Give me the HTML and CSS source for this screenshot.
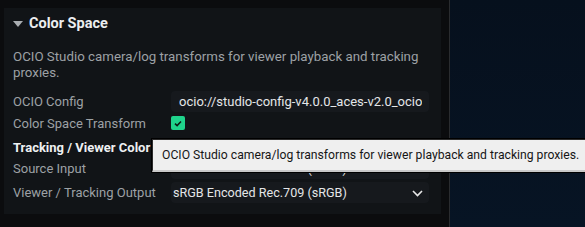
FILE: index.html
```html
<!DOCTYPE html>
<html lang="en">
<head>
  <meta charset="UTF-8" />
  <title>Color Space</title>
  <link rel="stylesheet" href="styles.css">
</head>
<body>
  <div class="app">
    <aside class="sidebar">
      <section class="card">
        <div class="card-header">
          <span class="caret"></span>
          <h2>Color Space</h2>
        </div>
        <p class="desc">OCIO Studio camera/log transforms for viewer playback and tracking proxies.</p>

        <div class="row">
          <label>OCIO Config</label>
          <div class="field"><span class="field-text">ocio://studio-config-v4.0.0_aces-v2.0_ocio</span></div>
        </div>
        <div class="row">
          <label>Color Space Transform</label>
          <span class="check">
            <svg width="8" height="7" viewBox="0 0 8 7"><path d="M1 3.6 L3.1 5.6 L7 1.4" fill="none" stroke="#0c1a14" stroke-width="1.5"/></svg>
          </span>
        </div>

        <h3 class="sub">Tracking / Viewer Color</h3>
        <div class="row">
          <label>Source Input</label>
          <div class="field select">sRGB Encoded Rec.709 (sRGB)
            <svg class="chev" width="11" height="7" viewBox="0 0 11 7"><path d="M1 1 L5.5 5.5 L10 1" fill="none" stroke="#e8e8e8" stroke-width="1.6"/></svg>
          </div>
        </div>
        <div class="row last">
          <label>Viewer / Tracking Output</label>
          <div class="field select">sRGB Encoded Rec.709 (sRGB)
            <svg class="chev" width="11" height="7" viewBox="0 0 11 7"><path d="M1 1 L5.5 5.5 L10 1" fill="none" stroke="#e8e8e8" stroke-width="1.6"/></svg>
          </div>
        </div>
      </section>
    </aside>
    <main class="viewport"></main>

    <div class="tooltip">OCIO Studio camera/log transforms for viewer playback and tracking proxies.</div>
  </div>
</body>
</html>
```

FILE: styles.css
```css
* {
  box-sizing: border-box;
  margin: 0;
  padding: 0;
}

body {
  font-family: Roboto, 'Noto Sans', sans-serif;
  background: #0b0c0e;
  width: 585px;
  height: 227px;
  overflow: hidden;
}

.app {
  position: relative;
  display: flex;
  height: 227px;
}

.sidebar {
  width: 450px;
  background: #0b0c0e;
  border-right: 1px solid #2a2c2f;
  padding: 8px 0 0 4px;
}

.viewport {
  flex: 1;
  background: linear-gradient(180deg, #06101d 0%, #071424 100%);
}

.card {
  width: 437px;
  background: #111417;
  padding: 0 12px 11px 9px;
}

.card-header {
  display: flex;
  align-items: center;
  height: 30px;
}

.caret {
  width: 0;
  height: 0;
  border-left: 5px solid transparent;
  border-right: 5px solid transparent;
  border-top: 6px solid #a9adb1;
  margin: 1px 6px 0 0;
}

.card-header h2 {
  font-size: 14.5px;
  font-weight: 700;
  color: #eceef0;
}

.desc {
  margin-top: 11px;
  font-size: 13.3px;
  line-height: 16px;
  color: #9da1a5;
}

.row {
  display: flex;
  align-items: center;
  height: 22px;
}

.desc + .row {
  margin-top: 9px;
}

.row label {
  width: 158px;
  font-size: 13px;
  color: #9da1a5;
}

.row.last {
  margin-top: 2px;
}

.field {
  width: 258px;
  height: 21px;
  line-height: 21px;
  padding: 0 8px;
  background: #16191d;
  border-radius: 4px;
  font-size: 13px;
  color: #e4e6e8;
  white-space: nowrap;
}

.field-text {
  display: block;
  width: 243px;
  overflow: hidden;
}

.select {
  position: relative;
  padding-left: 2px;
  font-size: 12.6px;
}

.chev {
  position: absolute;
  right: 6px;
  top: 8px;
}

.check {
  width: 14px;
  height: 14px;
  background: #1fd38b;
  border-radius: 2px;
  display: flex;
  align-items: center;
  justify-content: center;
}

.sub {
  margin-top: 5px;
  height: 18px;
  line-height: 18px;
  font-size: 13px;
  font-weight: 700;
  color: #eef0f2;
}

.tooltip {
  position: absolute;
  left: 152px;
  top: 139px;
  width: 440px;
  height: 33px;
  line-height: 31px;
  padding-left: 9px;
  background: #efefef;
  border: 1px solid #2b2b2b;
  border-bottom: 2px solid #c9c9c9;
  box-shadow: 0 0 0 1px #000;
  font-size: 12.2px;
  color: #161616;
  white-space: nowrap;
}
```
